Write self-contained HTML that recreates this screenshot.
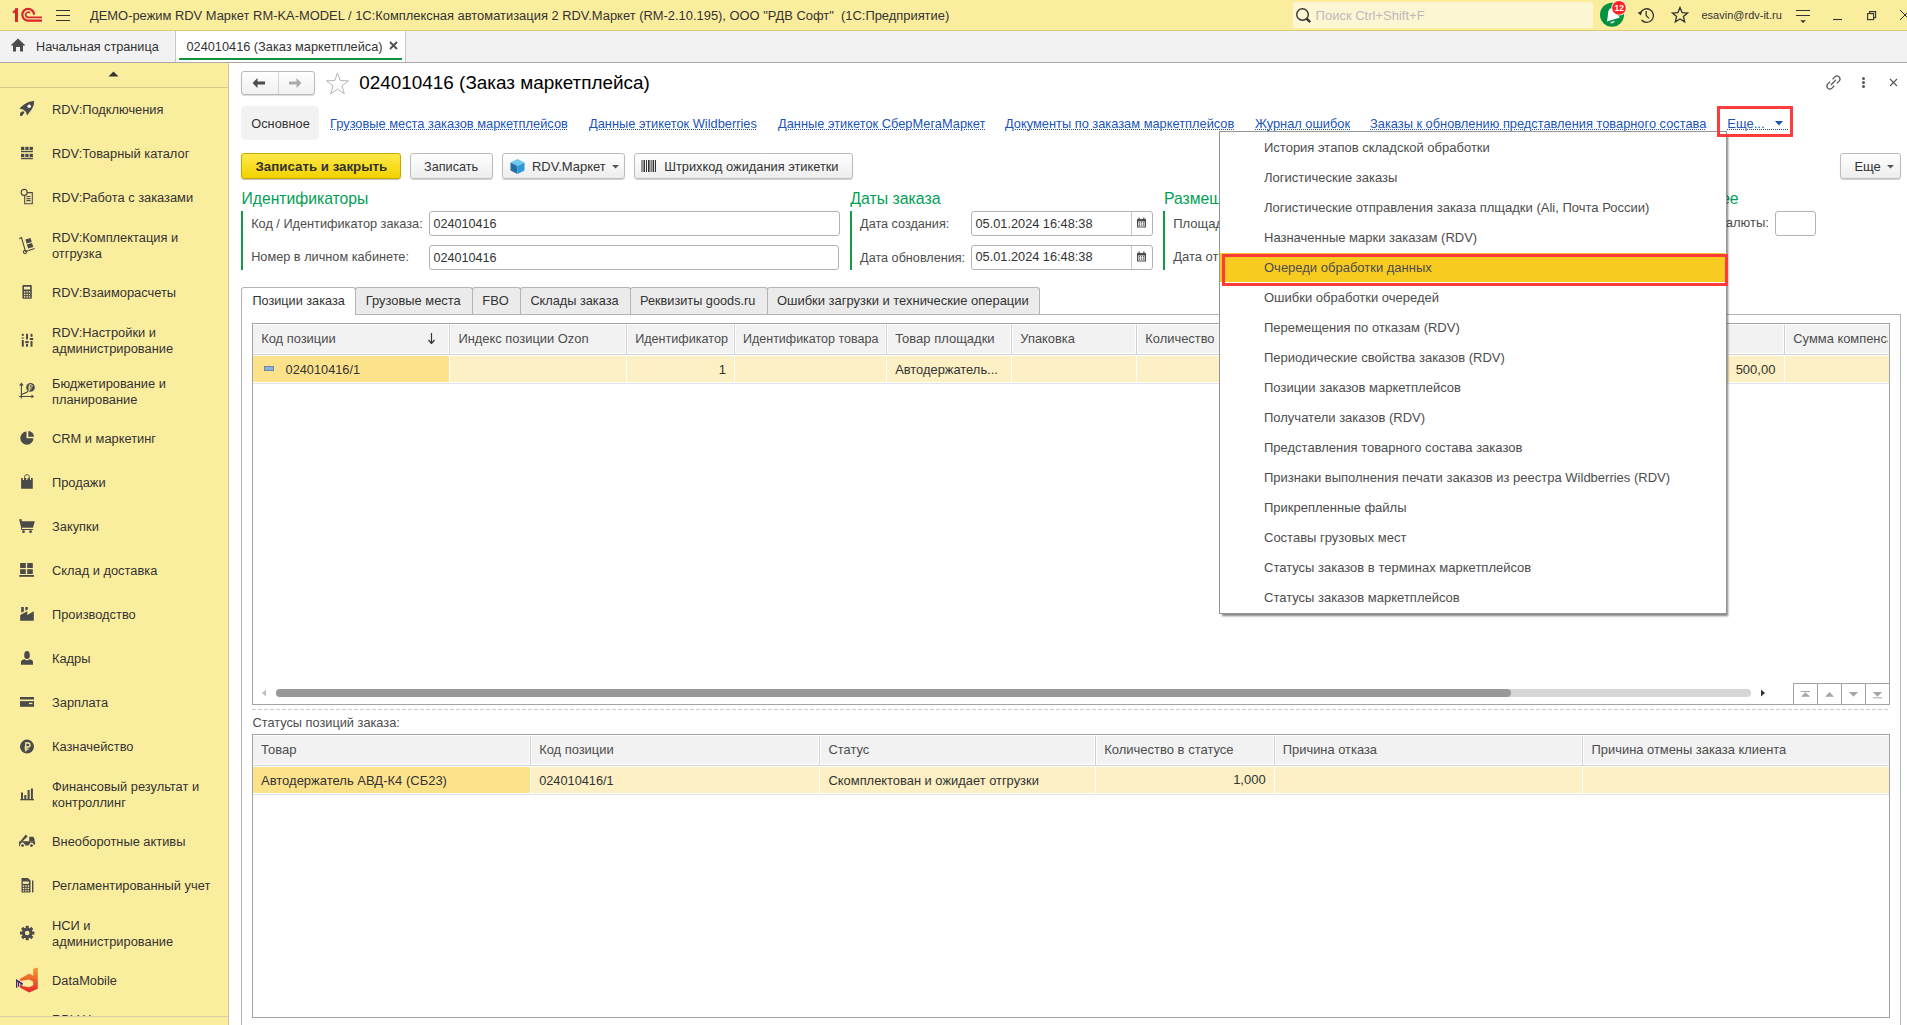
<!DOCTYPE html><html><head><meta charset="utf-8"><style>
*{box-sizing:border-box;margin:0;padding:0}
html,body{width:1907px;height:1025px;overflow:hidden;background:#fff;font-family:"Liberation Sans",sans-serif;font-size:13px;color:#333}
.a{position:absolute;white-space:nowrap}
.box{position:absolute}
.lnk{color:#1B55B5}
.lnk u{text-decoration:underline dotted #1B55B5;text-decoration-thickness:1px;text-underline-offset:0.5px}
</style></head><body>
<div class="box" style="left:0;top:0;width:1907px;height:31px;background:#FBED9E;border-bottom:1px solid #DCCB78"></div>
<svg class="box" style="left:0px;top:0px" width="46" height="30" viewBox="0 0 46 30">
<g fill="none" stroke="#D9262A">
<path d="M16.5 8.2 V22" stroke-width="3"/>
<path d="M13 12.8 L17.2 9" stroke-width="2.2"/>
<path d="M34.1 14.8 A5.9 5.9 0 1 0 28.2 20.7 H42" stroke-width="2.2"/>
<path d="M30.1 12.9 A2.6 2.6 0 1 0 28.2 17.4 H42" stroke-width="1.7"/>
</g></svg>
<div class="box" style="left:56px;top:10px;width:14px;height:1.4px;background:#333"></div>
<div class="box" style="left:56px;top:15px;width:14px;height:1.4px;background:#333"></div>
<div class="box" style="left:56px;top:20px;width:14px;height:1.4px;background:#333"></div>
<div class="a " style="left:90px;top:7.53px;font-size:12.92px;line-height:16px;color:#333;">ДЕМО-режим RDV Маркет RM-KA-MODEL / 1С:Комплексная автоматизация 2 RDV.Маркет (RM-2.10.195), ООО "РДВ Софт"&nbsp; (1С:Предприятие)</div>
<div class="box" style="left:1293px;top:2px;width:300px;height:26px;background:#FDF6D3;border-radius:2px"></div>
<svg class="box" style="left:1295px;top:7px" width="17" height="17" viewBox="0 0 17 17"><circle cx="7.5" cy="7.5" r="5.8" fill="none" stroke="#333" stroke-width="1.4"/><path d="M11.6 11.6 L15.2 15.2" stroke="#333" stroke-width="2.4"/></svg>
<div class="a " style="left:1315.6px;top:7.50px;font-size:13px;line-height:16px;color:#BDB8BC;">Поиск Ctrl+Shift+F</div>
<svg class="box" style="left:1598px;top:0px" width="30" height="30" viewBox="0 0 30 30">
<circle cx="14" cy="14.85" r="12" fill="#03923F"/>
<path d="M9.1 21.6 L10.3 11.4 Q11.3 8.6 13 7.9 L22 17.6 Z" fill="#fff"/>
<ellipse cx="14.6" cy="22.3" rx="2.2" ry="0.8" transform="rotate(-20 14.6 22.3)" fill="#fff"/>
<circle cx="21" cy="7.9" r="7.7" fill="#fff"/>
<circle cx="21" cy="7.9" r="6.9" fill="#FF2222"/>
<text x="21.2" y="11" style="font-family:'Liberation Sans',sans-serif;font-weight:bold;font-size:8.5px" fill="#fff" text-anchor="middle">12</text>
</svg>
<svg class="box" style="left:1636px;top:5px" width="20" height="20" viewBox="0 0 20 20">
<path d="M4.2 8.5 A6.8 6.8 0 1 1 5.5 15" fill="none" stroke="#333" stroke-width="1.3"/>
<path d="M1.6 7.8 L5.8 6.2 L5 10.4 Z" fill="#333"/>
<path d="M10.2 6 V10.6 L13 13.4" fill="none" stroke="#333" stroke-width="1.3"/>
</svg>
<svg class="box" style="left:1671px;top:6px" width="18" height="18" viewBox="0 0 18 18">
<path d="M9 1.5 L11.1 6.6 L16.6 7 L12.4 10.5 L13.7 15.9 L9 13 L4.3 15.9 L5.6 10.5 L1.4 7 L6.9 6.6 Z" fill="none" stroke="#333" stroke-width="1.3" stroke-linejoin="miter"/>
</svg>
<div class="a " style="left:1701.5px;top:7.96px;font-size:11px;line-height:14px;color:#333;">esavin@rdv-it.ru</div>
<svg class="box" style="left:1780px;top:0px" width="127" height="30" viewBox="0 0 127 30">
<path d="M16 10.5 H30 M16 15.5 H30" stroke="#333" stroke-width="1.1"/>
<path d="M20.2 20.2 H26 L23.1 23 Z" fill="#333"/>
<path d="M53 19.5 H62" stroke="#333" stroke-width="1.1"/>
<path d="M89.6 13.3 V11.6 H95.6 V17.6 H93.7" fill="none" stroke="#333" stroke-width="1.1"/>
<rect x="87.6" y="13.6" width="6" height="6" fill="none" stroke="#333" stroke-width="1.1"/>
<path d="M120 10 L130 20 M130 10 L120 20" stroke="#333" stroke-width="1"/>
</svg>
<div class="box" style="left:0;top:31px;width:1907px;height:32px;background:#F2F2F2;border-bottom:1px solid #A9A9A9"></div>
<svg class="box" style="left:10px;top:38px" width="16" height="14" viewBox="0 0 16 14"><path d="M8 0.5 L15.5 7.5 L13 7.5 L13 13.5 L10 13.5 L10 9 L6 9 L6 13.5 L3 13.5 L3 7.5 L0.5 7.5 Z" fill="#4D4D4D"/></svg>
<div class="a " style="left:36px;top:38.80px;font-size:12.7px;line-height:16px;color:#333;">Начальная страница</div>
<div class="box" style="left:175px;top:31px;width:231px;height:31px;background:#fff;border-left:1px solid #C8C8C8;border-right:1px solid #C8C8C8"></div>
<div class="box" style="left:179px;top:58px;width:223px;height:2px;background:#12933F"></div>
<div class="a " style="left:186.5px;top:38.79px;font-size:12.75px;line-height:16px;color:#333;">024010416 (Заказ маркетплейса)</div>
<svg class="box" style="left:389px;top:41px" width="9" height="9" viewBox="0 0 9 9"><path d="M1 1 L8 8 M8 1 L1 8" stroke="#4D4D4D" stroke-width="1.8"/></svg>
<div class="box" style="left:0;top:63px;width:229px;height:962px;background:#FBED9E;border-right:1px solid #CFC69E"></div>
<div class="box" style="left:0;top:87px;width:228px;height:1px;background:#D8C98A"></div>
<svg class="box" style="left:108px;top:71px" width="11" height="6" viewBox="0 0 11 6"><path d="M0.5 5.5 L5.5 0.5 L10.5 5.5 Z" fill="#333"/></svg>
<div class="a " style="left:52px;top:101.75px;font-size:12.85px;line-height:16px;color:#333;">RDV:Подключения</div>
<div class="a " style="left:52px;top:145.75px;font-size:12.85px;line-height:16px;color:#333;">RDV:Товарный каталог</div>
<div class="a " style="left:52px;top:189.75px;font-size:12.85px;line-height:16px;color:#333;">RDV:Работа с заказами</div>
<div class="a " style="left:52px;top:229.75px;font-size:12.85px;line-height:16px;color:#333;">RDV:Комплектация и</div>
<div class="a " style="left:52px;top:245.75px;font-size:12.85px;line-height:16px;color:#333;">отгрузка</div>
<div class="a " style="left:52px;top:284.75px;font-size:12.85px;line-height:16px;color:#333;">RDV:Взаиморасчеты</div>
<div class="a " style="left:52px;top:324.75px;font-size:12.85px;line-height:16px;color:#333;">RDV:Настройки и</div>
<div class="a " style="left:52px;top:340.75px;font-size:12.85px;line-height:16px;color:#333;">администрирование</div>
<div class="a " style="left:52px;top:375.75px;font-size:12.85px;line-height:16px;color:#333;">Бюджетирование и</div>
<div class="a " style="left:52px;top:391.75px;font-size:12.85px;line-height:16px;color:#333;">планирование</div>
<div class="a " style="left:52px;top:430.75px;font-size:12.85px;line-height:16px;color:#333;">CRM и маркетинг</div>
<div class="a " style="left:52px;top:474.75px;font-size:12.85px;line-height:16px;color:#333;">Продажи</div>
<div class="a " style="left:52px;top:518.75px;font-size:12.85px;line-height:16px;color:#333;">Закупки</div>
<div class="a " style="left:52px;top:562.75px;font-size:12.85px;line-height:16px;color:#333;">Склад и доставка</div>
<div class="a " style="left:52px;top:606.75px;font-size:12.85px;line-height:16px;color:#333;">Производство</div>
<div class="a " style="left:52px;top:650.75px;font-size:12.85px;line-height:16px;color:#333;">Кадры</div>
<div class="a " style="left:52px;top:694.75px;font-size:12.85px;line-height:16px;color:#333;">Зарплата</div>
<div class="a " style="left:52px;top:738.75px;font-size:12.85px;line-height:16px;color:#333;">Казначейство</div>
<div class="a " style="left:52px;top:778.75px;font-size:12.85px;line-height:16px;color:#333;">Финансовый результат и</div>
<div class="a " style="left:52px;top:794.75px;font-size:12.85px;line-height:16px;color:#333;">контроллинг</div>
<div class="a " style="left:52px;top:833.75px;font-size:12.85px;line-height:16px;color:#333;">Внеоборотные активы</div>
<div class="a " style="left:52px;top:877.75px;font-size:12.85px;line-height:16px;color:#333;">Регламентированный учет</div>
<div class="a " style="left:52px;top:917.75px;font-size:12.85px;line-height:16px;color:#333;">НСИ и</div>
<div class="a " style="left:52px;top:933.75px;font-size:12.85px;line-height:16px;color:#333;">администрирование</div>
<div class="a " style="left:52px;top:972.75px;font-size:12.85px;line-height:16px;color:#333;">DataMobile</div>
<div class="a " style="left:52px;top:1011.75px;font-size:12.85px;line-height:16px;color:#333;">RDV:Настроики</div>

<svg class="box" style="left:0;top:0" width="229" height="1025" viewBox="0 0 229 1025">
<g fill="#4A4A4A" stroke="none">
<!-- rocket -->
<path d="M19.3 108.5 L24 104.5 Q29 100.5 34 101 Q34.5 106 30.5 111 L27 115.5 L26 112 L23 109.5 Z"/>
<circle cx="29.2" cy="106.2" r="1.7" fill="#fff"/>
<path d="M20 113 L23 111 L24.5 112.8 L21.8 116 L20.2 116 Z"/>
<!-- grid catalog -->
<rect x="21" y="146.8" width="3.3" height="3.3"/><rect x="25.3" y="146.8" width="3.3" height="3.3"/><rect x="29.6" y="146.8" width="3.3" height="3.3"/>
<rect x="21" y="150.9" width="11.9" height="1.3"/>
<rect x="21" y="153.8" width="3.3" height="3.3"/><rect x="25.3" y="153.8" width="3.3" height="3.3"/><rect x="29.6" y="153.8" width="3.3" height="3.3"/>
<rect x="21" y="157.9" width="11.9" height="1.3"/>
</g>
<g fill="none" stroke="#4A4A4A" stroke-width="1.1">
<!-- doc clock -->
<circle cx="24.2" cy="192.4" r="3"/>
<path d="M27 192.6 H32.3 V203.8 H24.7 V195.5"/>
<path d="M26.5 196.5 H30.5 M26.5 198.6 H30.5 M26.5 200.6 H30.5"/>
<!-- trolley -->
<path d="M19.2 238.8 L21.5 237.5 L25.5 251.5 L34.6 248.5"/>
<circle cx="25" cy="252" r="1.6"/>
</g>
<g fill="#4A4A4A">
<path d="M25.3 239.5 L30.5 238 L31.8 242 L26.6 243.5 Z"/>
<path d="M26.8 244.5 L32 243 L33.3 247 L28.1 248.5 Z"/>
<!-- calculator -->
<path d="M23.5 285 H30.8 Q31.8 285 31.8 286 V297.8 Q31.8 298.8 30.8 298.8 H23.5 Q22.4 298.8 22.4 297.8 V286 Q22.4 285 23.5 285 Z M24 286.8 V289.5 H30.2 V286.8 Z"/>
</g>
<g fill="#FBED9E">
<rect x="24" y="291.2" width="1.4" height="1.4"/><rect x="26.4" y="291.2" width="1.4" height="1.4"/><rect x="28.8" y="291.2" width="1.4" height="1.4"/>
<rect x="24" y="293.8" width="1.4" height="1.4"/><rect x="26.4" y="293.8" width="1.4" height="1.4"/><rect x="28.8" y="293.8" width="1.4" height="1.4"/>
<rect x="24" y="296.2" width="1.4" height="1.4"/><rect x="26.4" y="296.2" width="1.4" height="1.4"/><rect x="28.8" y="296.2" width="1.4" height="1.4"/>
</g>
<g fill="#4A4A4A">
<!-- sliders -->
<rect x="21.8" y="333.8" width="2" height="2"/><path d="M21 337.5 H24.5 L22.8 339 Z"/><rect x="21.8" y="340" width="2" height="6.7"/>
<rect x="26" y="333.8" width="2" height="5.6"/><rect x="25.3" y="341" width="3.4" height="2.2"/><rect x="26" y="344" width="2" height="2.7"/>
<rect x="30.5" y="333.8" width="2" height="3"/><rect x="29.8" y="338" width="3.4" height="2"/><rect x="30.5" y="341" width="2" height="5.7"/>
</g>
<g fill="none" stroke="#4A4A4A" stroke-width="1.1">
<!-- budget axes -->
<path d="M21.4 384.5 V398.5 M19 396.5 H32.5"/>
<path d="M22 394.5 L23.5 393.5 H24.5 L25.5 392.5 H26.5 L27.5 391.5 H28"/>
</g>
<g fill="#4A4A4A">
<path d="M19 385.5 L21.4 382.5 L23.8 385.5 Z"/><path d="M31.5 394.5 L34 396.5 L31.5 398.5 Z"/>
<circle cx="30.5" cy="387.4" r="4.3"/>
</g>
<path d="M29.3 391 V384.8 H31.2 Q32.3 384.8 32.3 386 Q32.3 387.2 31.2 387.2 H28.4 M28.4 389 H31.6" fill="none" stroke="#FBED9E" stroke-width="0.9"/>
<g fill="#4A4A4A">
<!-- pie -->
<path d="M26.5 431.5 A6.6 6.6 0 1 0 33.5 438.3 L26.5 438.3 Z"/>
<path d="M28.3 431 A6 6 0 0 1 34 436.7 L28.3 436.7 Z"/>
<!-- bag -->
<path d="M21.1 478.1 H22.8 V480 H24 V478.1 H26.2 V480 H27.5 V478.1 H29.7 V480 H31 V478.1 H32.8 V488.8 H21.1 Z"/>
</g>
<path d="M24.5 481 V477 Q24.5 474.6 27 474.6 Q29.4 474.6 29.4 477 V481" fill="none" stroke="#4A4A4A" stroke-width="0.9"/>
<g fill="#4A4A4A">
<!-- cart -->
<path d="M19.1 519.2 H21.8 V521.2 H34.8 L33 527.7 H21.8 V529 H33 V530 H21 V527 Z"/>
<circle cx="23.5" cy="531.7" r="1.4"/><circle cx="30.6" cy="531.7" r="1.4"/>
<!-- warehouse -->
<rect x="20.1" y="563" width="5.7" height="5"/><rect x="27.2" y="563" width="5.6" height="5"/>
<rect x="20.1" y="569.2" width="5.7" height="4.8"/><rect x="27.2" y="569.2" width="5.6" height="4.8"/>
<rect x="19.2" y="575" width="14.8" height="1.8"/>
<!-- factory -->
<path d="M20.2 615 L27.3 611.3 V615 L33.8 611.3 V620.7 H20.2 Z"/>
<path d="M21.2 607 H23.8 V611.6 L21.3 612.8 Z"/><path d="M25.3 607 H27.8 V609.5 L25.3 610.8 Z"/>
<!-- person -->
<path d="M24.2 656 Q24 651 27 651 Q30 651 29.8 656 Q29.6 658.8 27 659 Q24.4 658.8 24.2 656 Z"/>
<path d="M21 661.5 Q21.5 659.6 24.4 659.2 L27 660.5 L29.6 659.2 Q32.5 659.6 33 661.5 V664.8 H21 Z"/>
<!-- card -->
<path d="M20 697 H34 V706.8 H20 Z"/>
</g>
<rect x="20" y="699.5" width="14" height="1.6" fill="#FBED9E"/>
<rect x="29" y="702.8" width="3.4" height="1.3" fill="#FBED9E"/>
<g fill="#4A4A4A">
<!-- ruble coin -->
<circle cx="27" cy="746.6" r="7"/>
</g>
<path d="M25.8 751.5 V743 H28.2 Q30 743 30 745 Q30 747 28.2 747 H24.6 M24.6 749.2 H28.6" fill="none" stroke="#FBED9E" stroke-width="1.3"/>
<g fill="#4A4A4A">
<!-- bars -->
<rect x="21" y="792.5" width="2" height="7"/><rect x="24.3" y="795" width="2" height="4.5"/><rect x="27.6" y="790" width="2" height="9.5"/><rect x="30.9" y="788.5" width="2" height="11"/>
<rect x="20.3" y="799" width="13.7" height="1.3"/>
<!-- truck -->
<path d="M19.1 841.2 H35.1 V844.6 H33.5 A2 2 0 0 0 29.5 844.6 H28.8 V845.4 H25.2 V844.6 H24.5 A2 2 0 0 0 20.5 844.6 H20 V846.2 H19.1 Z"/>
<path d="M29.2 836.8 H33.4 L34.5 839 V841.3 H29.2 Z"/>
<path d="M20.3 841.3 L25.8 834.5 L27.6 836.6 L22.6 841.3 Z"/>
<circle cx="22.5" cy="845.6" r="1.4"/><circle cx="31.5" cy="845.6" r="1.4"/>
<!-- regl calc -->
<path d="M21.5 878 H28 L30.5 880.5 V892.4 H21.5 Z"/>
<rect x="32" y="880.5" width="1.4" height="11.9"/>
</g>
<g fill="#FBED9E">
<rect x="22.8" y="881.5" width="6" height="2.4"/>
<rect x="22.8" y="885.3" width="1.4" height="1.4"/><rect x="25.2" y="885.3" width="1.4" height="1.4"/><rect x="27.6" y="885.3" width="1.4" height="1.4"/>
<rect x="22.8" y="887.8" width="1.4" height="1.4"/><rect x="25.2" y="887.8" width="1.4" height="1.4"/><rect x="27.6" y="887.8" width="1.4" height="1.4"/>
<rect x="22.8" y="890.2" width="1.4" height="1.2"/><rect x="25.2" y="890.2" width="1.4" height="1.2"/><rect x="27.6" y="890.2" width="1.4" height="1.2"/>
</g>
<!-- gear -->
<g transform="translate(27.2 933)" fill="#4A4A4A">
<circle r="5.2"/>
<rect x="-1.5" y="-7.2" width="3" height="14.4"/>
<rect x="-1.5" y="-7.2" width="3" height="14.4" transform="rotate(45)"/>
<rect x="-1.5" y="-7.2" width="3" height="14.4" transform="rotate(90)"/>
<rect x="-1.5" y="-7.2" width="3" height="14.4" transform="rotate(135)"/>
<circle r="2.3" fill="#FBED9E"/>
</g>
<!-- datamobile -->
<defs><linearGradient id="dmg" x1="0" y1="0" x2="0" y2="1"><stop offset="0" stop-color="#F39A2A"/><stop offset="1" stop-color="#E52A2A"/></linearGradient></defs>
<path d="M20.1 978.7 L29.2 973.4 L33.2 975.7 V968.8 L37.8 967.5 V988.7 L29.2 992.4 L20.1 987.7 V985.5 L29.2 987.3 L33.2 985.2 V981.7 L29.2 979.5 L20.1 980.9 Z" fill="url(#dmg)"/>
<path d="M16 987.7 V979 L22.9 983.2 V985 L21.6 984.2 V986.7 H20.4 V983.6 L19.2 982.9 V986.8 H18 V982.1 L17.3 981.7 V987.7 Z" fill="#4B2577"/>
</svg>

<div class="box" style="left:0;top:1016px;width:228px;height:9px;background:#FBED9E;border-top:1px solid #D5CDA5"></div>
<div class="box" style="left:241px;top:71px;width:74px;height:24px;border:1px solid #B9B9B9;border-radius:3px;background:linear-gradient(#fff,#F0F0F0);box-shadow:0 1px 1px rgba(0,0,0,.15)"></div>
<div class="box" style="left:278px;top:72px;width:1px;height:22px;background:#D5D5D5"></div>
<svg class="box" style="left:252px;top:77px" width="14" height="12" viewBox="0 0 14 12"><path d="M0.5 6 L5.5 1 V4.6 H13 V7.4 H5.5 V11 Z" fill="#4D4D4D"/></svg>
<svg class="box" style="left:288px;top:77px" width="14" height="12" viewBox="0 0 14 12"><path d="M13.5 6 L8.5 1 V4.6 H1 V7.4 H8.5 V11 Z" fill="#A9A9A9"/></svg>
<svg class="box" style="left:325px;top:72px" width="25" height="23" viewBox="0 0 25 23"><path d="M12.5 1 L15.3 8.6 L23.5 8.8 L17 13.8 L19.3 21.8 L12.5 17.1 L5.7 21.8 L8 13.8 L1.5 8.8 L9.7 8.6 Z" fill="none" stroke="#B5B5B5" stroke-width="1"/></svg>
<div class="a " style="left:359.3px;top:71.35px;font-size:18.9px;line-height:24px;color:#000;">024010416 (Заказ маркетплейса)</div>
<svg class="box" style="left:1824px;top:73px" width="19" height="19" viewBox="0 0 19 19">
<path d="M8.6 6.2 L10.9 3.9 Q13 1.9 15.1 3.9 Q17.1 6 15.1 8.1 L12.8 10.4 M10.3 12.8 L8 15.1 Q5.9 17.1 3.8 15.1 Q1.8 13 3.8 10.9 L6.1 8.6 M6.9 12 L12 6.9" fill="none" stroke="#555" stroke-width="1.25"/></svg>
<div class="box" style="left:1862px;top:77px;width:3px;height:3px;border-radius:50%;background:#555"></div>
<div class="box" style="left:1862px;top:81px;width:3px;height:3px;border-radius:50%;background:#555"></div>
<div class="box" style="left:1862px;top:85px;width:3px;height:3px;border-radius:50%;background:#555"></div>
<svg class="box" style="left:1889px;top:78px" width="9" height="9" viewBox="0 0 9 9"><path d="M1 1 L8 8 M8 1 L1 8" stroke="#555" stroke-width="1.1"/></svg>
<div class="box" style="left:241px;top:106px;width:78px;height:34px;background:#F2F2F2;border-radius:4px"></div>
<div class="a " style="left:251.3px;top:115.89px;font-size:12.75px;line-height:16px;color:#333;">Основное</div>
<div class="a lnk" style="left:330px;top:115.86px;font-size:12.83px;line-height:16px;"><u>Грузовые места заказов маркетплейсов</u></div>
<div class="a lnk" style="left:589px;top:115.86px;font-size:12.83px;line-height:16px;"><u>Данные этикеток Wildberries</u></div>
<div class="a lnk" style="left:778px;top:115.86px;font-size:12.83px;line-height:16px;"><u>Данные этикеток СберМегаМаркет</u></div>
<div class="a lnk" style="left:1005px;top:115.86px;font-size:12.83px;line-height:16px;"><u>Документы по заказам маркетплейсов</u></div>
<div class="a lnk" style="left:1255px;top:115.86px;font-size:12.83px;line-height:16px;"><u>Журнал ошибок</u></div>
<div class="a lnk" style="left:1370px;top:115.86px;font-size:12.83px;line-height:16px;"><u>Заказы к обновлению представления товарного состава</u></div>
<div class="a lnk" style="left:1727.3px;top:115.70px;font-size:13px;line-height:16px;"><u>Еще...&nbsp;&nbsp;&nbsp;&nbsp;&nbsp;&nbsp;&nbsp;</u></div>
<svg class="box" style="left:1775px;top:121px" width="8" height="5" viewBox="0 0 8 5"><path d="M0 0 H8 L4 4.5 Z" fill="#1B55B5"/></svg>
<div class="box" style="left:241px;top:153px;width:160px;height:26px;border:1px solid #C9A800;border-radius:3px;background:linear-gradient(#FFE94A,#F2D200);box-shadow:0 1px 1px rgba(0,0,0,.25)"></div>
<div class="a " style="left:255.5px;top:158.40px;font-size:13.3px;line-height:17px;color:#333;"><b>Записать и закрыть</b></div>
<div class="box" style="left:410px;top:153px;width:83px;height:26px;border:1px solid #BDBDBD;border-radius:3px;background:linear-gradient(#FFFFFF,#EDEDED);box-shadow:0 1px 1px rgba(0,0,0,.18)"></div>
<div class="a " style="left:424px;top:159.10px;font-size:12.7px;line-height:16px;color:#333;">Записать</div>
<div class="box" style="left:502px;top:153px;width:123px;height:26px;border:1px solid #BDBDBD;border-radius:3px;background:linear-gradient(#FFFFFF,#EDEDED);box-shadow:0 1px 1px rgba(0,0,0,.18)"></div>
<svg class="box" style="left:509px;top:158px" width="17" height="17" viewBox="0 0 17 17">
<path d="M8.5 1 L15.5 4.5 L8.5 8 L1.5 4.5 Z" fill="#6DC7EE"/>
<path d="M1.5 4.5 L8.5 8 V16 L1.5 12.5 Z" fill="#1F6FA8"/>
<path d="M15.5 4.5 L8.5 8 V16 L15.5 12.5 Z" fill="#2F98D6"/></svg>
<div class="a " style="left:531.9px;top:159.00px;font-size:13px;line-height:16px;color:#333;">RDV.Маркет</div>
<svg class="box" style="left:612px;top:165px" width="7" height="4" viewBox="0 0 7 4"><path d="M0 0 H7 L3.5 3.5 Z" fill="#555"/></svg>
<div class="box" style="left:634px;top:153px;width:219px;height:26px;border:1px solid #BDBDBD;border-radius:3px;background:linear-gradient(#FFFFFF,#EDEDED);box-shadow:0 1px 1px rgba(0,0,0,.18)"></div>
<svg class="box" style="left:641px;top:159px" width="16" height="14" viewBox="0 0 16 14"><g fill="#333"><rect x="0.5" y="1" width="1" height="12"/><rect x="2.5" y="1" width="1.5" height="12"/><rect x="5" y="1" width="1" height="12"/><rect x="7" y="1" width="1.6" height="12"/><rect x="9.6" y="1" width="1" height="12"/><rect x="11.6" y="1" width="1.5" height="12"/><rect x="14" y="1" width="1" height="12"/></g></svg>
<div class="a " style="left:664.2px;top:159.06px;font-size:12.82px;line-height:16px;color:#333;">Штрихкод ожидания этикетки</div>
<div class="box" style="left:1840px;top:153px;width:61px;height:26px;border:1px solid #BDBDBD;border-radius:3px;background:linear-gradient(#FFFFFF,#EDEDED);box-shadow:0 1px 1px rgba(0,0,0,.18)"></div>
<div class="a " style="left:1854.4px;top:158.70px;font-size:13px;line-height:16px;color:#333;">Еще</div>
<svg class="box" style="left:1887px;top:165px" width="7" height="4" viewBox="0 0 7 4"><path d="M0 0 H7 L3.5 3.5 Z" fill="#555"/></svg>
<div class="a " style="left:241.5px;top:189.31px;font-size:15.7px;line-height:20px;color:#00A054;">Идентификаторы</div>
<div class="box" style="left:241px;top:211px;width:2px;height:59px;background:#129A46"></div>
<div class="a " style="left:251.2px;top:215.69px;font-size:12.73px;line-height:16px;color:#4D4D4D;">Код / Идентификатор заказа:</div>
<div class="a " style="left:251.2px;top:249.49px;font-size:12.73px;line-height:16px;color:#4D4D4D;">Номер в личном кабинете:</div>
<div class="box" style="left:429px;top:211px;width:411px;height:25px;border:1px solid #B3B3B3;border-radius:3px;background:#fff"></div>
<div class="box" style="left:429px;top:245px;width:410px;height:25px;border:1px solid #B3B3B3;border-radius:3px;background:#fff"></div>
<div class="a " style="left:433.5px;top:215.74px;font-size:12.6px;line-height:16px;color:#333;">024010416</div>
<div class="a " style="left:433.5px;top:249.54px;font-size:12.6px;line-height:16px;color:#333;">024010416</div>
<div class="a " style="left:850.2px;top:189.26px;font-size:15.85px;line-height:20px;color:#00A054;">Даты заказа</div>
<div class="box" style="left:850px;top:211px;width:2px;height:59px;background:#129A46"></div>
<div class="a " style="left:860.1px;top:215.72px;font-size:12.65px;line-height:16px;color:#4D4D4D;">Дата создания:</div>
<div class="a " style="left:860.1px;top:249.52px;font-size:12.65px;line-height:16px;color:#4D4D4D;">Дата обновления:</div>
<div class="box" style="left:971px;top:211px;width:182px;height:25px;border:1px solid #B3B3B3;border-radius:3px;background:#fff"></div>
<div class="box" style="left:1131px;top:212px;width:1px;height:23px;background:#C8C8C8"></div>
<svg class="box" style="left:1136px;top:217px" width="11" height="11" viewBox="0 0 11 11"><path d="M1 2 H10 V10.5 H1 Z" fill="#4D4D4D"/><rect x="2.2" y="4.5" width="6.6" height="5" fill="#fff"/><g fill="#4D4D4D"><rect x="2.8" y="5.2" width="1.3" height="1.3"/><rect x="4.9" y="5.2" width="1.3" height="1.3"/><rect x="7" y="5.2" width="1.3" height="1.3"/><rect x="2.8" y="7.4" width="1.3" height="1.3"/><rect x="4.9" y="7.4" width="1.3" height="1.3"/><rect x="7" y="7.4" width="1.3" height="1.3"/><rect x="2.5" y="0.5" width="1.3" height="2.5"/><rect x="7.2" y="0.5" width="1.3" height="2.5"/></g></svg>
<div class="box" style="left:971px;top:245px;width:182px;height:25px;border:1px solid #B3B3B3;border-radius:3px;background:#fff"></div>
<div class="box" style="left:1131px;top:246px;width:1px;height:23px;background:#C8C8C8"></div>
<svg class="box" style="left:1136px;top:251px" width="11" height="11" viewBox="0 0 11 11"><path d="M1 2 H10 V10.5 H1 Z" fill="#4D4D4D"/><rect x="2.2" y="4.5" width="6.6" height="5" fill="#fff"/><g fill="#4D4D4D"><rect x="2.8" y="5.2" width="1.3" height="1.3"/><rect x="4.9" y="5.2" width="1.3" height="1.3"/><rect x="7" y="5.2" width="1.3" height="1.3"/><rect x="2.8" y="7.4" width="1.3" height="1.3"/><rect x="4.9" y="7.4" width="1.3" height="1.3"/><rect x="7" y="7.4" width="1.3" height="1.3"/><rect x="2.5" y="0.5" width="1.3" height="2.5"/><rect x="7.2" y="0.5" width="1.3" height="2.5"/></g></svg>
<div class="a " style="left:975.5px;top:215.69px;font-size:12.75px;line-height:16px;color:#333;">05.01.2024 16:48:38</div>
<div class="a " style="left:975.5px;top:249.49px;font-size:12.75px;line-height:16px;color:#333;">05.01.2024 16:48:38</div>
<div class="a " style="left:1164px;top:189.31px;font-size:15.7px;line-height:20px;color:#00A054;">Размещение</div>
<div class="box" style="left:1163px;top:211px;width:2px;height:59px;background:#129A46"></div>
<div class="a " style="left:1173.2px;top:215.60px;font-size:13px;line-height:16px;color:#4D4D4D;">Площадка:</div>
<div class="a " style="left:1173.2px;top:249.40px;font-size:13px;line-height:16px;color:#4D4D4D;">Дата отгрузки:</div>
<div class="a " style="left:1684.6px;top:189.31px;font-size:15.7px;line-height:20px;color:#00A054;">Прочее</div>
<div class="a " style="left:1693.3px;top:215.40px;font-size:13px;line-height:16px;color:#4D4D4D;">Код валюты:</div>
<div class="box" style="left:1775px;top:211px;width:41px;height:25px;border:1px solid #B3B3B3;border-radius:3px;background:#fff"></div>
<div class="box" style="left:241px;top:314px;width:1660px;height:711px;border-left:1px solid #B4B4B4;border-right:1px solid #B4B4B4;border-top:1px solid #B4B4B4"></div>
<div class="box" style="left:241px;top:287px;width:115px;height:28px;background:#fff;border:1px solid #B4B4B4;border-bottom:none;border-radius:3px 3px 0 0"></div>
<div class="a " style="left:252.4px;top:292.81px;font-size:12.69px;line-height:16px;color:#333;">Позиции заказа</div>
<div class="box" style="left:355px;top:287px;width:118px;height:27px;background:#EBEBEB;border:1px solid #B4B4B4;border-bottom:none;border-radius:3px 3px 0 0"></div>
<div class="a " style="left:365.8px;top:292.74px;font-size:12.9px;line-height:16px;color:#333;">Грузовые места</div>
<div class="box" style="left:472px;top:287px;width:49px;height:27px;background:#EBEBEB;border:1px solid #B4B4B4;border-bottom:none;border-radius:3px 3px 0 0"></div>
<div class="a " style="left:482.3px;top:292.74px;font-size:12.9px;line-height:16px;color:#333;">FBO</div>
<div class="box" style="left:520px;top:287px;width:111px;height:27px;background:#EBEBEB;border:1px solid #B4B4B4;border-bottom:none;border-radius:3px 3px 0 0"></div>
<div class="a " style="left:530.4px;top:292.79px;font-size:12.74px;line-height:16px;color:#333;">Склады заказа</div>
<div class="box" style="left:630px;top:287px;width:138px;height:27px;background:#EBEBEB;border:1px solid #B4B4B4;border-bottom:none;border-radius:3px 3px 0 0"></div>
<div class="a " style="left:640px;top:292.79px;font-size:12.73px;line-height:16px;color:#333;">Реквизиты goods.ru</div>
<div class="box" style="left:767px;top:287px;width:273px;height:27px;background:#EBEBEB;border:1px solid #B4B4B4;border-bottom:none;border-radius:3px 3px 0 0"></div>
<div class="a " style="left:777px;top:292.72px;font-size:12.96px;line-height:16px;color:#333;">Ошибки загрузки и технические операции</div>
<div class="box" style="left:252px;top:323px;width:1638px;height:382px;border:1px solid #A3A3A3;background:#fff"></div>
<div class="box" style="left:253px;top:325px;width:1636px;height:28px;background:#F2F2F2"></div>
<div class="box" style="left:253px;top:354px;width:1636px;height:1px;background:#D3D3D3"></div>
<div class="box" style="left:253px;top:356px;width:1636px;height:26px;background:#FCF0C4"></div>
<div class="box" style="left:253px;top:356px;width:196px;height:26px;background:#FDE28C"></div>
<div class="box" style="left:253px;top:383px;width:1636px;height:1px;background:#E3E3E3"></div>
<div class="box" style="left:449px;top:325px;width:1px;height:29px;background:#CFCFCF"></div>
<div class="box" style="left:450px;top:325px;width:1px;height:28px;background:#fff"></div>
<div class="box" style="left:448px;top:325px;width:1px;height:28px;background:#fff"></div>
<div class="box" style="left:449px;top:356px;width:1.4px;height:26px;background:#fff"></div>
<div class="box" style="left:626px;top:325px;width:1px;height:29px;background:#CFCFCF"></div>
<div class="box" style="left:627px;top:325px;width:1px;height:28px;background:#fff"></div>
<div class="box" style="left:625px;top:325px;width:1px;height:28px;background:#fff"></div>
<div class="box" style="left:626px;top:356px;width:1.4px;height:26px;background:#fff"></div>
<div class="box" style="left:734px;top:325px;width:1px;height:29px;background:#CFCFCF"></div>
<div class="box" style="left:735px;top:325px;width:1px;height:28px;background:#fff"></div>
<div class="box" style="left:733px;top:325px;width:1px;height:28px;background:#fff"></div>
<div class="box" style="left:734px;top:356px;width:1.4px;height:26px;background:#fff"></div>
<div class="box" style="left:886px;top:325px;width:1px;height:29px;background:#CFCFCF"></div>
<div class="box" style="left:887px;top:325px;width:1px;height:28px;background:#fff"></div>
<div class="box" style="left:885px;top:325px;width:1px;height:28px;background:#fff"></div>
<div class="box" style="left:886px;top:356px;width:1.4px;height:26px;background:#fff"></div>
<div class="box" style="left:1011px;top:325px;width:1px;height:29px;background:#CFCFCF"></div>
<div class="box" style="left:1012px;top:325px;width:1px;height:28px;background:#fff"></div>
<div class="box" style="left:1010px;top:325px;width:1px;height:28px;background:#fff"></div>
<div class="box" style="left:1011px;top:356px;width:1.4px;height:26px;background:#fff"></div>
<div class="box" style="left:1136px;top:325px;width:1px;height:29px;background:#CFCFCF"></div>
<div class="box" style="left:1137px;top:325px;width:1px;height:28px;background:#fff"></div>
<div class="box" style="left:1135px;top:325px;width:1px;height:28px;background:#fff"></div>
<div class="box" style="left:1136px;top:356px;width:1.4px;height:26px;background:#fff"></div>
<div class="box" style="left:1260px;top:325px;width:1px;height:29px;background:#CFCFCF"></div>
<div class="box" style="left:1261px;top:325px;width:1px;height:28px;background:#fff"></div>
<div class="box" style="left:1259px;top:325px;width:1px;height:28px;background:#fff"></div>
<div class="box" style="left:1260px;top:356px;width:1.4px;height:26px;background:#fff"></div>
<div class="box" style="left:1385px;top:325px;width:1px;height:29px;background:#CFCFCF"></div>
<div class="box" style="left:1386px;top:325px;width:1px;height:28px;background:#fff"></div>
<div class="box" style="left:1384px;top:325px;width:1px;height:28px;background:#fff"></div>
<div class="box" style="left:1385px;top:356px;width:1.4px;height:26px;background:#fff"></div>
<div class="box" style="left:1510px;top:325px;width:1px;height:29px;background:#CFCFCF"></div>
<div class="box" style="left:1511px;top:325px;width:1px;height:28px;background:#fff"></div>
<div class="box" style="left:1509px;top:325px;width:1px;height:28px;background:#fff"></div>
<div class="box" style="left:1510px;top:356px;width:1.4px;height:26px;background:#fff"></div>
<div class="box" style="left:1635px;top:325px;width:1px;height:29px;background:#CFCFCF"></div>
<div class="box" style="left:1636px;top:325px;width:1px;height:28px;background:#fff"></div>
<div class="box" style="left:1634px;top:325px;width:1px;height:28px;background:#fff"></div>
<div class="box" style="left:1635px;top:356px;width:1.4px;height:26px;background:#fff"></div>
<div class="box" style="left:1784px;top:325px;width:1px;height:29px;background:#CFCFCF"></div>
<div class="box" style="left:1785px;top:325px;width:1px;height:28px;background:#fff"></div>
<div class="box" style="left:1783px;top:325px;width:1px;height:28px;background:#fff"></div>
<div class="box" style="left:1784px;top:356px;width:1.4px;height:26px;background:#fff"></div>
<div class="a " style="left:261.2px;top:330.74px;font-size:12.9px;line-height:16px;color:#4D4D4D;">Код позиции</div>
<div class="a " style="left:458.4px;top:330.74px;font-size:12.9px;line-height:16px;color:#4D4D4D;">Индекс позиции Ozon</div>
<div class="a " style="left:635.2px;top:330.84px;font-size:12.6px;line-height:16px;color:#4D4D4D;">Идентификатор</div>
<div class="a " style="left:743px;top:330.87px;font-size:12.5px;line-height:16px;color:#4D4D4D;">Идентификатор товара</div>
<div class="a " style="left:895.2px;top:330.70px;font-size:13px;line-height:16px;color:#4D4D4D;">Товар площадки</div>
<div class="a " style="left:1020.3px;top:330.74px;font-size:12.9px;line-height:16px;color:#4D4D4D;">Упаковка</div>
<div class="a " style="left:1145.3px;top:330.74px;font-size:12.9px;line-height:16px;color:#4D4D4D;">Количество</div>
<div class="a " style="left:1793.3px;top:330.74px;font-size:12.9px;line-height:16px;color:#4D4D4D;width:95px;overflow:hidden;">Сумма компенсации</div>
<svg class="box" style="left:428px;top:333px" width="7" height="11" viewBox="0 0 7 11"><path d="M3.5 0 V10" stroke="#333" stroke-width="1.2"/><path d="M0.5 7 L3.5 10.5 L6.5 7" fill="none" stroke="#333" stroke-width="1.2"/></svg>
<div class="box" style="left:264px;top:366px;width:10px;height:5px;background:#8DB2D4;border:1px solid #6289B2"></div>
<div class="a " style="left:285.6px;top:361.79px;font-size:12.75px;line-height:16px;color:#333;">024010416/1</div>
<div class="a" style="left:626px;top:361.5px;width:100px;text-align:right;font-size:13px;line-height:16px;color:#333">1</div>
<div class="a " style="left:895.2px;top:361.74px;font-size:12.9px;line-height:16px;color:#333;">Автодержатель...</div>
<div class="a" style="left:1675px;top:361.5px;width:100.4px;text-align:right;font-size:13px;line-height:16px;color:#333">500,00</div>
<svg class="box" style="left:261px;top:689px" width="6" height="8" viewBox="0 0 6 8"><path d="M5 0.5 V7.5 L1 4 Z" fill="#BDBDBD"/></svg>
<div class="box" style="left:276px;top:689px;width:1475px;height:8px;border-radius:4px;background:#D6D6D6"></div>
<div class="box" style="left:276px;top:689px;width:1235px;height:8px;border-radius:4px;background:#999"></div>
<svg class="box" style="left:1760px;top:689px" width="6" height="8" viewBox="0 0 6 8"><path d="M1 0.5 V7.5 L5 4 Z" fill="#333"/></svg>
<div class="box" style="left:1793px;top:683px;width:97px;height:22px;border:1px solid #A3A3A3;background:#fff"></div>
<div class="box" style="left:1817px;top:683px;width:1px;height:22px;background:#A3A3A3"></div>
<div class="box" style="left:1841px;top:683px;width:1px;height:22px;background:#A3A3A3"></div>
<div class="box" style="left:1865px;top:683px;width:1px;height:22px;background:#A3A3A3"></div>
<svg class="box" style="left:1794px;top:684px" width="96" height="20" viewBox="0 0 96 20"><g fill="#A5A5A5">
<rect x="7" y="7" width="9" height="1"/><path d="M7 12.7 L11.5 8.2 L16 12.7 Z"/>
<path d="M31 12.7 L35.5 8 L40 12.7 Z"/>
<path d="M55 8 L59.5 12.7 L64 8 Z"/>
<path d="M79 8 L83.5 12.7 L88 8 Z"/><rect x="79" y="13.3" width="9" height="1"/></g></svg>
<div class="box" style="left:252px;top:709px;width:1637px;height:1px;background:repeating-linear-gradient(90deg,#C8C8C8 0 4px,transparent 4px 6px)"></div>
<div class="a " style="left:252.5px;top:714.58px;font-size:12.77px;line-height:16px;color:#4D4D4D;">Статусы позиций заказа:</div>
<div class="box" style="left:252px;top:734px;width:1638px;height:284px;border:1px solid #A3A3A3;background:#fff"></div>
<div class="box" style="left:253px;top:736px;width:1636px;height:28px;background:#F2F2F2"></div>
<div class="box" style="left:253px;top:765px;width:1636px;height:1px;background:#D3D3D3"></div>
<div class="box" style="left:253px;top:767px;width:1636px;height:26px;background:#FCF0C4"></div>
<div class="box" style="left:253px;top:767px;width:277px;height:26px;background:#FDE28C"></div>
<div class="box" style="left:253px;top:794px;width:1636px;height:1px;background:#E3E3E3"></div>
<div class="box" style="left:530px;top:736px;width:1px;height:29px;background:#CFCFCF"></div>
<div class="box" style="left:531px;top:736px;width:1px;height:28px;background:#fff"></div>
<div class="box" style="left:529px;top:736px;width:1px;height:28px;background:#fff"></div>
<div class="box" style="left:530px;top:767px;width:1.4px;height:26px;background:#fff"></div>
<div class="box" style="left:819px;top:736px;width:1px;height:29px;background:#CFCFCF"></div>
<div class="box" style="left:820px;top:736px;width:1px;height:28px;background:#fff"></div>
<div class="box" style="left:818px;top:736px;width:1px;height:28px;background:#fff"></div>
<div class="box" style="left:819px;top:767px;width:1.4px;height:26px;background:#fff"></div>
<div class="box" style="left:1095px;top:736px;width:1px;height:29px;background:#CFCFCF"></div>
<div class="box" style="left:1096px;top:736px;width:1px;height:28px;background:#fff"></div>
<div class="box" style="left:1094px;top:736px;width:1px;height:28px;background:#fff"></div>
<div class="box" style="left:1095px;top:767px;width:1.4px;height:26px;background:#fff"></div>
<div class="box" style="left:1274px;top:736px;width:1px;height:29px;background:#CFCFCF"></div>
<div class="box" style="left:1275px;top:736px;width:1px;height:28px;background:#fff"></div>
<div class="box" style="left:1273px;top:736px;width:1px;height:28px;background:#fff"></div>
<div class="box" style="left:1274px;top:767px;width:1.4px;height:26px;background:#fff"></div>
<div class="box" style="left:1582px;top:736px;width:1px;height:29px;background:#CFCFCF"></div>
<div class="box" style="left:1583px;top:736px;width:1px;height:28px;background:#fff"></div>
<div class="box" style="left:1581px;top:736px;width:1px;height:28px;background:#fff"></div>
<div class="box" style="left:1582px;top:767px;width:1.4px;height:26px;background:#fff"></div>
<div class="a " style="left:261px;top:741.90px;font-size:13px;line-height:16px;color:#4D4D4D;">Товар</div>
<div class="a " style="left:539.2px;top:741.94px;font-size:12.9px;line-height:16px;color:#4D4D4D;">Код позиции</div>
<div class="a " style="left:828.5px;top:741.94px;font-size:12.9px;line-height:16px;color:#4D4D4D;">Статус</div>
<div class="a " style="left:1104.2px;top:741.90px;font-size:13px;line-height:16px;color:#4D4D4D;">Количество в статусе</div>
<div class="a " style="left:1282.8px;top:741.94px;font-size:12.9px;line-height:16px;color:#4D4D4D;">Причина отказа</div>
<div class="a " style="left:1591.6px;top:741.94px;font-size:12.9px;line-height:16px;color:#4D4D4D;">Причина отмены заказа клиента</div>
<div class="a " style="left:261px;top:772.50px;font-size:13px;line-height:16px;color:#333;">Автодержатель АВД-К4 (СБ23)</div>
<div class="a " style="left:539.2px;top:772.59px;font-size:12.75px;line-height:16px;color:#333;">024010416/1</div>
<div class="a " style="left:828.5px;top:772.54px;font-size:12.9px;line-height:16px;color:#333;">Скомплектован и ожидает отгрузки</div>
<div class="a" style="left:1165px;top:772.3px;width:100.7px;text-align:right;font-size:13px;line-height:16px;color:#333">1,000</div>
<div class="box" style="left:1219px;top:131px;width:508px;height:483px;background:#fff;border:1px solid #959595;box-shadow:2px 3px 2px -1px rgba(0,0,0,.5)"></div>
<div class="box" style="left:1220px;top:253px;width:505px;height:29px;background:#F8CB21"></div>
<div class="box" style="left:1222px;top:254px;width:506px;height:32px;border:3px solid #FF3B3B"></div>
<div class="a " style="left:1264px;top:139.70px;font-size:13px;line-height:16px;color:#4D4D4D;">История этапов складской обработки</div>
<div class="a " style="left:1264px;top:169.70px;font-size:13px;line-height:16px;color:#4D4D4D;">Логистические заказы</div>
<div class="a " style="left:1264px;top:199.70px;font-size:13px;line-height:16px;color:#4D4D4D;">Логистические отправления заказа плщадки (Ali, Почта России)</div>
<div class="a " style="left:1264px;top:229.70px;font-size:13px;line-height:16px;color:#4D4D4D;">Назначенные марки заказам (RDV)</div>
<div class="a " style="left:1264px;top:259.70px;font-size:13px;line-height:16px;color:#4D4D4D;">Очереди обработки данных</div>
<div class="a " style="left:1264px;top:289.70px;font-size:13px;line-height:16px;color:#4D4D4D;">Ошибки обработки очередей</div>
<div class="a " style="left:1264px;top:319.70px;font-size:13px;line-height:16px;color:#4D4D4D;">Перемещения по отказам (RDV)</div>
<div class="a " style="left:1264px;top:349.70px;font-size:13px;line-height:16px;color:#4D4D4D;">Периодические свойства заказов (RDV)</div>
<div class="a " style="left:1264px;top:379.70px;font-size:13px;line-height:16px;color:#4D4D4D;">Позиции заказов маркетплейсов</div>
<div class="a " style="left:1264px;top:409.70px;font-size:13px;line-height:16px;color:#4D4D4D;">Получатели заказов (RDV)</div>
<div class="a " style="left:1264px;top:439.70px;font-size:13px;line-height:16px;color:#4D4D4D;">Представления товарного состава заказов</div>
<div class="a " style="left:1264px;top:469.70px;font-size:13px;line-height:16px;color:#4D4D4D;">Признаки выполнения печати заказов из реестра Wildberries (RDV)</div>
<div class="a " style="left:1264px;top:499.70px;font-size:13px;line-height:16px;color:#4D4D4D;">Прикрепленные файлы</div>
<div class="a " style="left:1264px;top:529.70px;font-size:13px;line-height:16px;color:#4D4D4D;">Составы грузовых мест</div>
<div class="a " style="left:1264px;top:559.70px;font-size:13px;line-height:16px;color:#4D4D4D;">Статусы заказов в терминах маркетплейсов</div>
<div class="a " style="left:1264px;top:589.70px;font-size:13px;line-height:16px;color:#4D4D4D;">Статусы заказов маркетплейсов</div>
<div class="box" style="left:1717px;top:106px;width:76px;height:31px;border:3px solid #FF3B3B"></div>
</body></html>
